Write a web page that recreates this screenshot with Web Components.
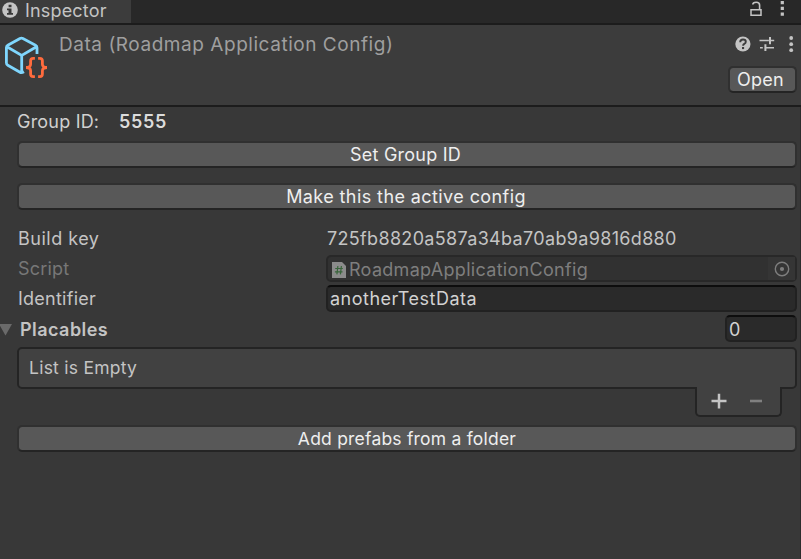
<!DOCTYPE html>
<html lang="en">
<head>
<meta charset="utf-8">
<title>Inspector</title>
<style>
html,body{margin:0;height:100%;background:#383838;overflow:hidden}
body{font:18px/27px Inter,sans-serif;color:#c4c4c4;font-kerning:normal}
</style>
</head>
<body>
<inspector-panel></inspector-panel>
<script>
function define(name, html) {
  const template = document.createElement('template');
  template.innerHTML = html;
  customElements.define(name, class extends HTMLElement {
    constructor() {
      super();
      this.attachShadow({mode: 'open'}).append(template.content.cloneNode(true));
    }
  });
}

define('tab-bar', `<style>
:host{display:flex;box-sizing:border-box;height:25px;background:#282828;border-bottom:2px solid #1c1c1c;line-height:21px;justify-content:space-between}
.tab{display:flex;width:131px;background:#3c3c3c;box-sizing:border-box;height:23px}
.tab svg{margin:2px 7px 0 2px;flex:none}
.tab span{letter-spacing:.17px}
.tools svg{display:block}
</style>
<div class="tab"><svg width="16" height="16" viewBox="0 0 16 16"><circle cx="8" cy="8" r="7.8" fill="#c4c4c4"/><path d="M6.6 2.7h2.9v2.5H6.6zM5 6.6h4.5v4.5H11v1.7H5v-1.7h1.5V8.3H5z" fill="#383838"/></svg><span>Inspector</span></div>
<div class="tools"><svg width="55" height="20" viewBox="746 0 55 20"><path d="M751 9.8h10v5.5h-10z" fill="none" stroke="#c4c4c4" stroke-width="1.5"/><path d="M752.8 4.6q0-2.4 3.4-2.4t3.4 2.9v4" fill="none" stroke="#c4c4c4" stroke-width="1.6"/><path d="M780.7 1.1h3.2v3.2h-3.2zm0 5.7h3.2V10h-3.2zm0 5.8h3.2v3.2h-3.2z" fill="#c4c4c4"/></svg></div>`);

define('asset-header', `<style>
:host{display:flex;box-sizing:border-box;height:82px;background:#3c3c3c;border-bottom:2px solid #1c1c1c;color:#9f9f9f}
.logo{flex:none;width:59px}
.title{flex:1;font-size:19px;letter-spacing:.54px;line-height:39px}
.side{width:73px;display:flex;flex-direction:column;gap:11px;padding-top:10px}
svg{display:block}
</style>
<svg class="logo" width="59" height="60" viewBox="0 25 59 60">
<path d="M37 54V47.7Q37 46 35.5 45.2L22.9 38.5Q21.4 37.7 20 38.5L7.8 45.2Q6.4 46 6.4 47.7V62.8Q6.4 64.5 7.8 65.3L20 72.3Q21.5 73.2 24 71.8M6.9 46.8L21.7 55.5L36.5 46.8M21.7 55.5V72" fill="none" stroke="#7fd6fd" stroke-width="2.8"/>
<path d="M34.9 58.3H33.2Q30.6 58.3 30.6 61V64.2Q30.6 67.5 26 67.5Q30.6 67.5 30.6 70.8V74Q30.6 76.7 33.2 76.7H34.9M38.1 58.3H39.8Q42.4 58.3 42.4 61V64.2Q42.4 67.5 47 67.5Q42.4 67.5 42.4 70.8V74Q42.4 76.7 39.8 76.7H38.1" fill="none" stroke="#ff6b3d" stroke-width="2.8"/></svg>
<div class="title">Data (Roadmap Application Config)</div>
<div class="side">
<svg width="73" height="20" viewBox="728 35 73 20"><circle cx="742.9" cy="44" r="7.6" fill="#c4c4c4"/><path d="M740.2 42.2q0-2.7 2.8-2.7t2.8 2.3q0 1.3-1.5 2-1.2.6-1.2 1.9" fill="none" stroke="#3c3c3c" stroke-width="1.9"/><path d="M742 47h2.1v2.1H742z" fill="#3c3c3c"/><path d="M759.5 40.6h9.4M771 40.6h3.2M760 47.7h2.8M765.7 47.7h8.3" stroke="#c4c4c4" stroke-width="1.5"/><path d="M770 37v7.3M765.4 44.3V51" stroke="#c4c4c4" stroke-width="2"/><g fill="#c4c4c4"><circle cx="791.2" cy="38" r="1.9"/><circle cx="791.2" cy="44.2" r="1.9"/><circle cx="791.2" cy="50.2" r="1.9"/></g></svg>
<flat-button style="width:69px;letter-spacing:.24px;--shift:-4px">Open</flat-button>
</div>`);

define('flat-button', `<style>
:host{display:block;box-sizing:border-box;height:27px;border:2px solid #303030;border-bottom-color:#242424;border-radius:5px;background:#585858;background-clip:padding-box;color:#eee;text-align:center;line-height:23px;white-space:nowrap}
span{display:block;padding-right:calc(-1*var(--shift,0px))}
</style><span><slot></slot></span>`);

define('field-row', `<style>
:host{display:flex;height:27px}
.label{width:308px;flex:none;padding-left:1px;box-sizing:border-box}
.value{flex:1;display:flex;min-width:0}
</style><div class="label"><slot name="label"></slot></div><div class="value"><slot></slot></div>`);

define('text-field', `<style>
:host{display:block;box-sizing:border-box;height:27px;margin-left:1px;border:2px solid #212121;border-top-color:#0d0d0d;border-radius:5px;background:#2a2a2a;line-height:23px;color:#d2d2d2;padding-left:2px;flex:1}
</style><slot></slot>`);

define('object-field', `<style>
:host{display:flex;box-sizing:border-box;height:27px;margin-left:1px;border:2px solid #282828;border-radius:5px;background:#313131;line-height:25px;color:#7e7e7e;flex:1}
.name{flex:1}
.file{margin:5px 3px 0 4px;flex:none}
.pick{width:27px;background:#353535}
svg{display:block}
</style>
<svg class="file" width="14" height="16" viewBox="0 0 14 16"><path d="M0 0h10l4 4v12H0z" fill="#8b8b8b"/><path d="M5.9 4l-1 8.4M9.4 4l-1 8.4M3.2 6.5h7.6M2.9 9.8h7.6" stroke="#38643a" stroke-width="1.2"/></svg>
<div class="name"><slot></slot></div>
<div class="pick"><svg width="27" height="23" viewBox="0 0 27 23"><circle cx="14" cy="12" r="6.7" fill="none" stroke="#7e7e7e" stroke-width="1.4"/><circle cx="14" cy="12" r="2.1" fill="#7e7e7e"/></svg></div>`);

define('foldout-row', `<style>
:host{display:flex;height:27px;line-height:29px}
svg{flex:none;margin-left:-17px}
b{font-weight:600;flex:1;letter-spacing:.45px;margin-left:1px}
</style><svg width="19" height="27" viewBox="0 0 19 27"><path d="M-1 9H12L5.5 20.5z" fill="#6a6a6a"/></svg><b><slot></slot></b><text-field style="flex:none;width:72px;line-height:25px">0</text-field>`);

define('item-list', `<style>
:host{display:flex;flex-direction:column;align-items:flex-end}
div{box-sizing:border-box;border:2px solid #242424;background:#414141}
.box{width:100%;height:42px;border-radius:5px;line-height:37px;font-size:17.5px;letter-spacing:.25px;padding-left:10px}
.foot{position:relative;width:87px;height:30px;margin:-2px 15px 0 0;border-top:0;border-radius:0 0 5px 5px}
svg{display:block}
</style><div class="box"><slot></slot></div>
<div class="foot"><svg width="82" height="28" viewBox="697 387 82 28"><path d="M711.5 401h15M719 393.8v14.6" stroke="#c4c4c4" stroke-width="2.5"/><path d="M750 401h12" stroke="#808080" stroke-width="2.6"/></svg></div>`);

define('inspector-panel', `<style>
:host{display:flex;flex-direction:column;height:559px;width:801px}
main{flex:1;box-sizing:border-box;display:flex;flex-direction:column;padding:0 3px 0 17px;border-right:1px solid #2c2c2c}
.group{display:flex;height:34px;line-height:30px}
.group span{letter-spacing:.2px;width:102px}
.group b{font-weight:600;letter-spacing:.68px;color:#dcdcdc}
.group span{color:#d0d0d0}
.fields{display:flex;flex-direction:column;gap:3px;margin:15px 0 5px}
.dim{color:#777}
</style>
<tab-bar></tab-bar>
<asset-header></asset-header>
<main>
<div class="group"><span>Group ID:</span><b>5555</b></div>
<flat-button style="letter-spacing:.21px;--shift:-3px">Set Group ID</flat-button>
<flat-button style="letter-spacing:.41px;margin-top:15px;--shift:-2px">Make this the active config</flat-button>
<div class="fields">
<field-row><span slot="label" style="letter-spacing:.5px">Build key</span><span style="letter-spacing:.33px;margin-left:2px">725fb8820a587a34ba70ab9a9816d880</span></field-row>
<field-row><span slot="label" class="dim" style="letter-spacing:.21px">Script</span><object-field style="letter-spacing:.3px">RoadmapApplicationConfig</object-field></field-row>
<field-row><span slot="label" style="letter-spacing:.25px">Identifier</span><text-field style="letter-spacing:.5px">anotherTestData</text-field></field-row>
<foldout-row>Placables</foldout-row>
</div>
<item-list>List is Empty</item-list>
<flat-button style="font-size:17.5px;letter-spacing:.21px;margin-top:8px">Add prefabs from a folder</flat-button>
</main>`);
</script>
</body>
</html>
